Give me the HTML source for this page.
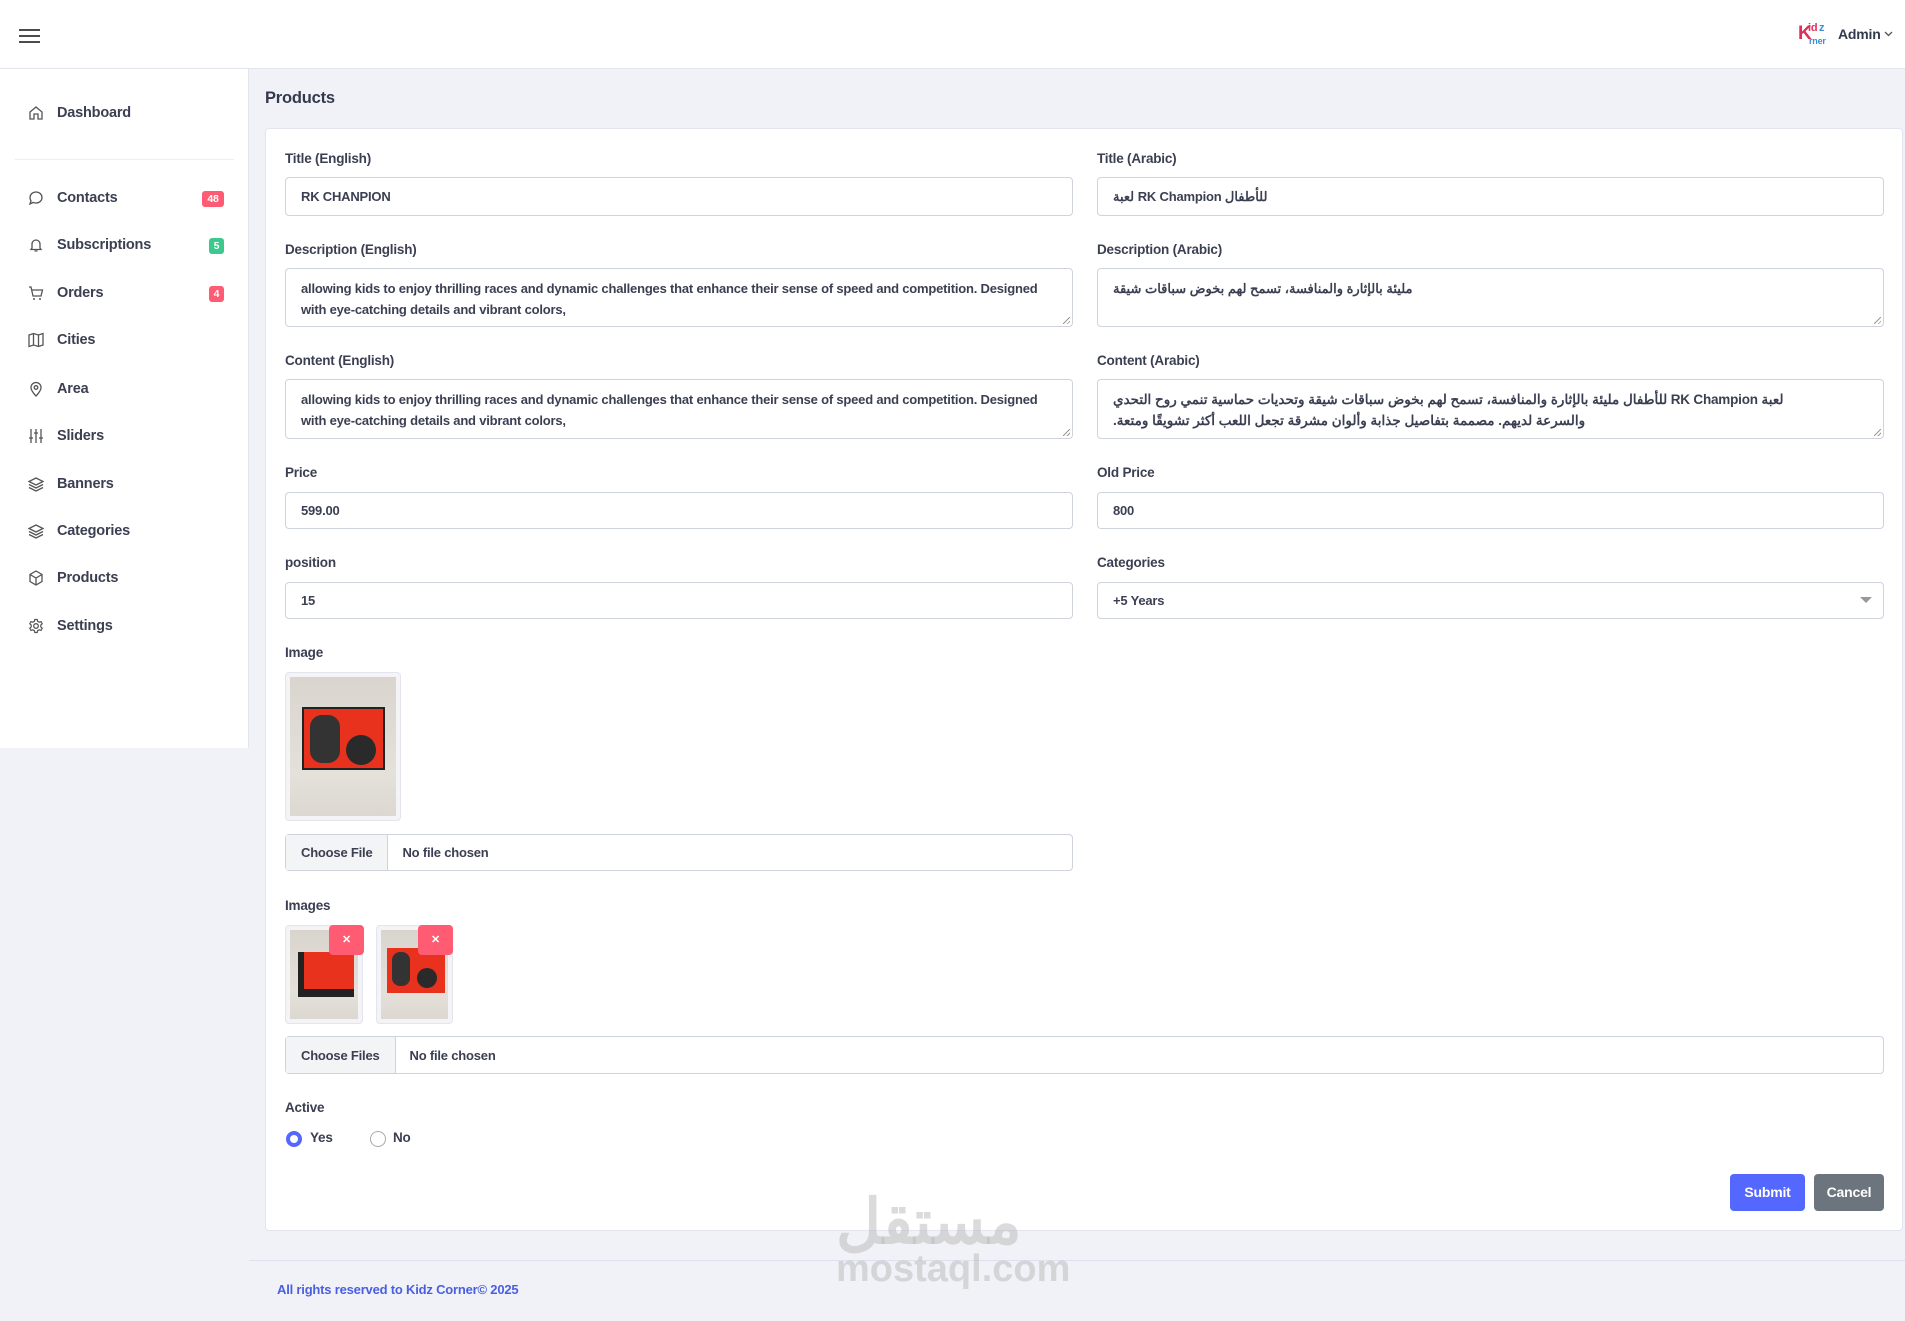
<!DOCTYPE html>
<html><head><meta charset="utf-8"><style>
*{box-sizing:border-box;margin:0;padding:0}
body{width:1905px;height:1321px;background:#f1f2f7;font-family:"Liberation Sans","Noto Sans CJK SC",sans-serif;color:#3b3f52;position:relative;overflow:hidden;font-weight:bold;font-size:13.5px;letter-spacing:-0.2px}
.a{position:absolute}
.hdr{left:0;top:0;width:1905px;height:69px;background:#fff;border-bottom:1px solid #e3e5ee}
.side{left:0;top:69px;width:249px;height:679px;background:#fff;border-right:1px solid #e3e5ee}
.nav{left:57px;font-size:14.5px;color:#3b3f52}
.ic{left:28px;width:16px;height:16px}
.badge{left:202px;height:16px;border-radius:3px;color:#fff;font-size:10.5px;text-align:center;line-height:16px}
.card{left:265px;top:128px;width:1638px;height:1103px;background:#fff;border:1px solid #e3e5ee;border-radius:4px}
.lbl{font-size:13.5px;color:#3b3f52}
.inp{border:1px solid #cfd3dc;border-radius:4px;background:#fff;padding-left:15px;font-size:13px;color:#3b3f52;display:flex;align-items:center}
.ta{border:1px solid #cfd3dc;border-radius:4px;background:#fff;padding:9px 15px;font-size:13px;line-height:21px;white-space:nowrap;overflow:hidden}
.ta::after{content:"";position:absolute;right:2px;bottom:2px;width:7px;height:7px;background:linear-gradient(135deg,transparent 45%,#999 45%,#999 55%,transparent 55%,transparent 75%,#999 75%,#999 85%,transparent 85%)}
.L{left:285px;width:788px}.R{left:1097px;width:787px}
.fb{background:#f3f4f6;border-right:1px solid #cfd3dc;height:100%;display:flex;align-items:center;padding:0 15px;margin-left:-15px;margin-right:14px}
.thumb{border:1px solid #e3e5ee;border-radius:4px;background:#f4f4f6;padding:4px}
.ph{background:linear-gradient(#d9d4ce,#e4e0da 70%,#dcd7d1);width:100%;height:100%;position:relative}
.x{width:35px;height:30px;background:#ff5c74;border-radius:4px;color:#fff;font-size:11px;text-align:center;line-height:30px}
</style></head><body>
<div class="a hdr"></div>
<svg class="a" style="left:19px;top:29px" width="22" height="14"><path d="M0 1H21M0 7H21M0 13H21" stroke="#333" stroke-width="1.8"/></svg>
<div class="a" style="left:1798px;top:22px;width:32px;height:28px">
<span class="a" style="left:0;top:1px;font-size:19px;color:#e0305a;font-weight:bold;letter-spacing:-1px">K</span>
<span class="a" style="left:10px;top:0px;font-size:11px;color:#e0305a">id</span>
<span class="a" style="left:21px;top:0px;font-size:11px;color:#3a8fd6">z</span>
<span class="a" style="left:11px;top:14px;font-size:9px;color:#3a8fd6">rner</span></div>
<div class="a" style="left:1838px;top:26px;font-size:14px;color:#333a4d">Admin</div>
<svg class="a" style="left:1884px;top:31px" width="9" height="6"><path d="M1 1L4.5 4.5L8 1" fill="none" stroke="#555" stroke-width="1.3"/></svg>

<div class="a side"></div>
<svg class="a ic" style="top:105px" viewBox="0 0 16 16"><path d="M2 7L8 2L14 7V14H10V9H6V14H2Z" fill="none" stroke="#555" stroke-width="1.3"/></svg>
<div class="a nav" style="top:105px">Dashboard</div>
<div class="a" style="left:15px;top:159px;width:219px;height:1px;background:#eceef4"></div>
<svg class="a ic" style="top:190px" viewBox="0 0 16 16"><path d="M8 2C11.5 2 14 4.5 14 7.5S11.5 13 8 13C7 13 6 12.8 5.2 12.4L2 14L3 11C2.4 10 2 8.8 2 7.5C2 4.5 4.5 2 8 2Z" fill="none" stroke="#555" stroke-width="1.3"/></svg>
<div class="a nav" style="top:190px">Contacts</div><div class="a badge" style="top:191px;width:22px;background:#ff5c74">48</div>
<svg class="a ic" style="top:237px" viewBox="0 0 16 16"><path d="M4 11V7A4 4 0 0 1 12 7V11L13 12.5H3Z M6.5 14H9.5" fill="none" stroke="#555" stroke-width="1.3"/></svg>
<div class="a nav" style="top:237px">Subscriptions</div><div class="a badge" style="top:238px;left:209px;width:15px;background:#3cc98e">5</div>
<svg class="a ic" style="top:285px" viewBox="0 0 16 16"><path d="M1 2H3L5 11H13L14.5 5H4" fill="none" stroke="#555" stroke-width="1.3"/><circle cx="6" cy="14" r="1" fill="#555"/><circle cx="12" cy="14" r="1" fill="#555"/></svg>
<div class="a nav" style="top:285px">Orders</div><div class="a badge" style="top:286px;left:209px;width:15px;background:#ff5c74">4</div>
<svg class="a ic" style="top:332px" viewBox="0 0 16 16"><path d="M1 3L5.5 1.5L10.5 3L15 1.5V13L10.5 14.5L5.5 13L1 14.5Z M5.5 1.5V13M10.5 3V14.5" fill="none" stroke="#555" stroke-width="1.3"/></svg>
<div class="a nav" style="top:332px">Cities</div>
<svg class="a ic" style="top:381px" viewBox="0 0 16 16"><path d="M8 15C8 15 3 10 3 6.5A5 5 0 0 1 13 6.5C13 10 8 15 8 15Z" fill="none" stroke="#555" stroke-width="1.3"/><circle cx="8" cy="6.5" r="1.8" fill="none" stroke="#555" stroke-width="1.3"/></svg>
<div class="a nav" style="top:381px">Area</div>
<svg class="a ic" style="top:428px" viewBox="0 0 16 16"><path d="M3 1V15M8 1V15M13 1V15M1 10H5M6 5H10M11 10H15" fill="none" stroke="#555" stroke-width="1.3"/></svg>
<div class="a nav" style="top:428px">Sliders</div>
<svg class="a ic" style="top:476px" viewBox="0 0 16 16"><path d="M8 2L15 5.5L8 9L1 5.5Z M1 8.5L8 12L15 8.5M1 11.5L8 15L15 11.5" fill="none" stroke="#555" stroke-width="1.3"/></svg>
<div class="a nav" style="top:476px">Banners</div>
<svg class="a ic" style="top:523px" viewBox="0 0 16 16"><path d="M8 2L15 5.5L8 9L1 5.5Z M1 8.5L8 12L15 8.5M1 11.5L8 15L15 11.5" fill="none" stroke="#555" stroke-width="1.3"/></svg>
<div class="a nav" style="top:523px">Categories</div>
<svg class="a ic" style="top:570px" viewBox="0 0 16 16"><path d="M8 1L14 4.5V11.5L8 15L2 11.5V4.5Z M2 4.5L8 8L14 4.5M8 8V15" fill="none" stroke="#555" stroke-width="1.3"/></svg>
<div class="a nav" style="top:570px">Products</div>
<svg class="a ic" style="top:618px" viewBox="0 0 16 16"><circle cx="8" cy="8" r="2.3" fill="none" stroke="#555" stroke-width="1.3"/><path d="M6.8 1.5H9.2L9.6 3.3L11.2 4.2L13 3.6L14.2 5.7L12.8 7V9L14.2 10.3L13 12.4L11.2 11.8L9.6 12.7L9.2 14.5H6.8L6.4 12.7L4.8 11.8L3 12.4L1.8 10.3L3.2 9V7L1.8 5.7L3 3.6L4.8 4.2L6.4 3.3Z" fill="none" stroke="#555" stroke-width="1.2"/></svg>
<div class="a nav" style="top:618px">Settings</div>

<div class="a" style="left:265px;top:89px;font-size:16.5px;color:#333a4d">Products</div>
<div class="a card"></div>

<div class="a lbl L" style="top:151px">Title (English)</div>
<div class="a lbl R" style="top:151px">Title (Arabic)</div>
<div class="a inp L" style="top:177px;height:39px">RK CHANPION</div>
<div class="a inp R" style="top:177px;height:39px"><span>لعبة RK Champion للأطفال</span></div>

<div class="a lbl L" style="top:242px">Description (English)</div>
<div class="a lbl R" style="top:242px">Description (Arabic)</div>
<div class="a ta L" style="top:268px;height:59px">allowing kids to enjoy thrilling races and dynamic challenges that enhance their sense of speed and competition. Designed<br>with eye-catching details and vibrant colors,</div>
<div class="a ta R" style="top:268px;height:59px"><span dir="rtl">مليئة بالإثارة والمنافسة، تسمح لهم بخوض سباقات شيقة</span></div>

<div class="a lbl L" style="top:353px">Content (English)</div>
<div class="a lbl R" style="top:353px">Content (Arabic)</div>
<div class="a ta L" style="top:379px;height:60px">allowing kids to enjoy thrilling races and dynamic challenges that enhance their sense of speed and competition. Designed<br>with eye-catching details and vibrant colors,</div>
<div class="a ta R" style="top:379px;height:60px"><div dir="rtl" style="text-align:left;font-size:13.5px">لعبة RK Champion للأطفال مليئة بالإثارة والمنافسة، تسمح لهم بخوض سباقات شيقة وتحديات حماسية تنمي روح التحدي</div><div style="text-align:left;font-size:13.5px">.والسرعة لديهم. مصممة بتفاصيل جذابة وألوان مشرقة تجعل اللعب أكثر تشويقًا ومتعة</div></div>

<div class="a lbl L" style="top:465px">Price</div>
<div class="a lbl R" style="top:465px">Old Price</div>
<div class="a inp L" style="top:492px;height:37px">599.00</div>
<div class="a inp R" style="top:492px;height:37px">800</div>

<div class="a lbl L" style="top:555px">position</div>
<div class="a lbl R" style="top:555px">Categories</div>
<div class="a inp L" style="top:582px;height:37px">15</div>
<div class="a inp R" style="top:582px;height:37px">+5 Years</div>
<svg class="a" style="left:1860px;top:597px" width="12" height="7"><path d="M0 0H12L6 6Z" fill="#999"/></svg>

<div class="a lbl L" style="top:645px">Image</div>
<div class="a thumb" style="left:285px;top:672px;width:116px;height:149px"><div class="ph">
<div class="a" style="left:12px;top:30px;width:83px;height:63px;background:#e8321e;border:2px solid #222"><div class="a" style="left:6px;top:6px;width:30px;height:48px;background:#333;border-radius:12px"></div><div class="a" style="left:42px;top:26px;width:30px;height:30px;background:#2a2a2a;border-radius:50%"></div></div></div></div>
<div class="a inp L" style="top:834px;height:37px"><div class="fb">Choose File</div>No file chosen</div>

<div class="a lbl L" style="top:898px">Images</div>
<div class="a thumb" style="left:285px;top:925px;width:78px;height:99px"><div class="ph"><div class="a" style="left:8px;top:22px;width:56px;height:45px;background:#e8321e;border-left:6px solid #222;border-bottom:8px solid #222"></div></div></div>
<div class="a x" style="left:329px;top:925px">✕</div>
<div class="a thumb" style="left:376px;top:925px;width:77px;height:99px"><div class="ph"><div class="a" style="left:6px;top:18px;width:58px;height:45px;background:#e8321e"><div class="a" style="left:5px;top:4px;width:18px;height:34px;background:#333;border-radius:8px"></div><div class="a" style="left:30px;top:20px;width:20px;height:20px;background:#2a2a2a;border-radius:50%"></div></div></div></div>
<div class="a x" style="left:418px;top:925px">✕</div>
<div class="a inp" style="left:285px;width:1599px;top:1036px;height:38px"><div class="fb">Choose Files</div>No file chosen</div>

<div class="a lbl L" style="top:1100px">Active</div>
<div class="a" style="left:286px;top:1131px;width:16px;height:16px;border-radius:50%;background:#fff;border:4.5px solid #5468ff"></div>
<div class="a" style="left:310px;top:1130px;font-size:13.5px">Yes</div>
<div class="a" style="left:370px;top:1131px;width:16px;height:16px;border-radius:50%;border:1px solid #aaa"></div>
<div class="a" style="left:393px;top:1130px;font-size:13.5px">No</div>

<div class="a" style="left:1730px;top:1174px;width:75px;height:37px;background:#5468ff;border-radius:4px;color:#fff;text-align:center;line-height:37px;font-size:14px">Submit</div>
<div class="a" style="left:1814px;top:1174px;width:70px;height:37px;background:#6c757d;border-radius:4px;color:#fff;text-align:center;line-height:37px;font-size:14px">Cancel</div>

<div class="a" style="left:249px;top:1260px;width:1656px;height:1px;background:#dde1ef"></div>
<div class="a" style="left:277px;top:1282px;font-size:13px;color:#4a5fe0">All rights reserved to Kidz Corner© 2025</div>
<div class="a" style="left:836px;top:1185px;font-size:62px;color:rgba(190,190,190,0.55);font-family:'Liberation Sans','Noto Sans CJK SC',sans-serif">مستقل</div>
<div class="a" style="left:836px;top:1248px;font-size:38px;color:rgba(190,190,190,0.55);letter-spacing:0;font-weight:bold">mostaql.com</div>
</body></html>
